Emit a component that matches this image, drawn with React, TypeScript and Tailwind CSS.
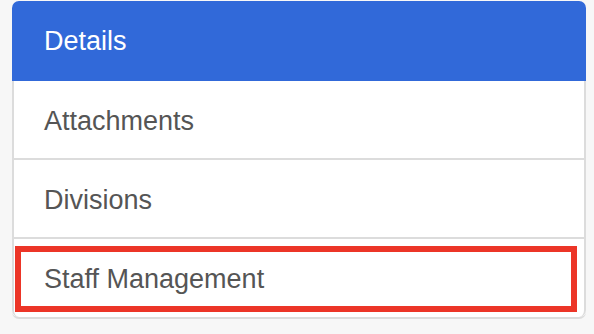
import React from 'react';

const items = ['Attachments', 'Divisions', 'Staff Management'];

export default function App() {
  return (
    <div className="h-[334px] w-[594px] bg-[#f7f7f7] pt-px pl-3" style={{ fontFamily: '"Liberation Sans", Arial, sans-serif' }}>
      <div className="w-[574px] rounded-[7px] border-b-2 border-[#dcdcdc] bg-white">
        <div className="flex h-[80px] items-center rounded-t-[7px] bg-[#3169d9] pl-[32px] text-[27px] text-white">
          Details
        </div>
        {items.map((name, idx) => (
          <div
            key={name}
            className={
              idx === items.length - 1
                ? 'relative flex h-[78px] items-center rounded-b-[7px] border-x-2 border-[#dcdcdc] pt-[3px] pl-[30px] text-[27px] text-[#555]'
                : 'flex h-[79px] items-center border-x-2 border-b-2 border-[#dcdcdc] pt-[3px] pl-[30px] text-[27px] text-[#555]'
            }>
            {name}
            {idx === items.length - 1 && (
              <div className="absolute top-[7px] right-[7px] bottom-[5px] left-[1px] border-[6px] border-[#ec3527]" />
            )}
          </div>
        ))}
      </div>
    </div>
  );
}
